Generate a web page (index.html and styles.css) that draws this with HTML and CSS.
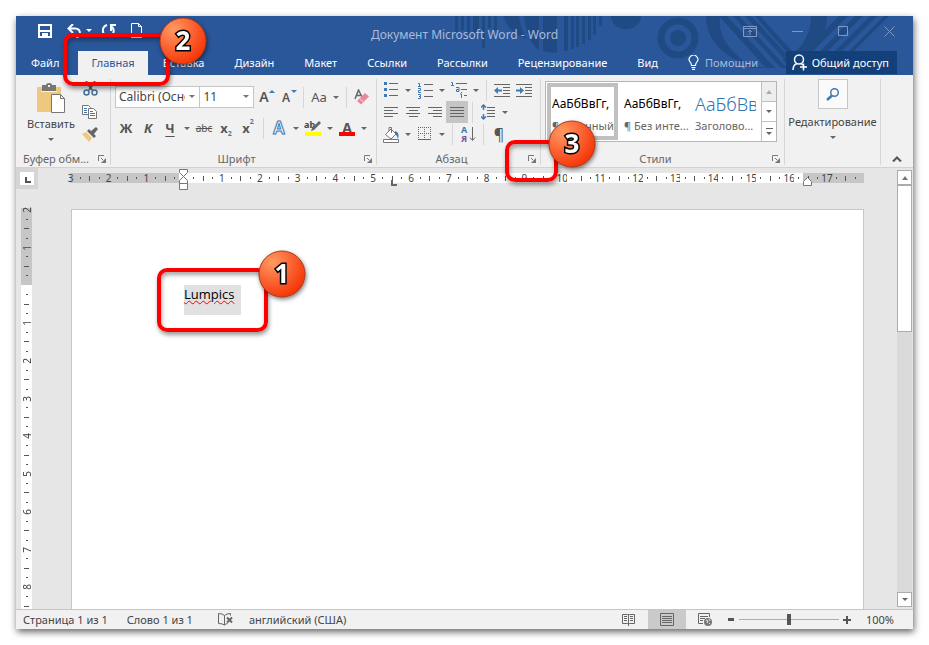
FILE: index.html
```html
<!DOCTYPE html>
<html lang="ru">
<head>
    <meta charset="UTF-8">
    <meta name="viewport" content="width=device-width, initial-scale=1.0">
    <title>Документ Microsoft Word - Word</title>
    <link rel="stylesheet" href="styles.css">
</head>
<body>
<div class="window">
    <header class="header">
        <svg class="pattern" width="460" height="59" viewBox="0 0 460 59" fill="#204a84">
            <path d="M2 0h3v17h-3zM8 0h3v14h-3zM14 0h3v18h-3zM20 0h6v17h-6zM29 0h3v32h-3zM35 0h3v12h-3zM41 0h3v14h-3z"/>
            <path d="M50 0h16q2 14 8 23q-18 -6 -24 -23zM71 0h15v34q-12 -7 -15 -34zM90 0h14v37q-8 0 -14 -2zM111 0h4v35h-4zM118 0h3v33h-3zM123 0h3v31h-3zM129 0h3v28h-3zM135 0h3v24h-3zM140 0h3v19h-3zM146 0h3v10h-3z"/>
            <path d="M158 0h30a15 13 0 0 1-30 0z"/>
            <circle cx="225" cy="22" r="17" fill="none" stroke="#204a84" stroke-width="7"/>
            <circle cx="225" cy="22" r="8"/>
            <path d="M253 0h14c-2 18 6 30 20 42l12 10h20c-38-1-66-22-66-52zM358 0h16c0 24-16 44-38 50l-7-6c18-8 29-24 29-44z"/>
            <path d="M266 0h8l48 52h-9zM280 0h6l48 52h-6zM292 0h6l40 43-3 4zM302 0h5l33 36-3 4zM386 0h9l-45 45h-9zM402 0h8l-45 45h-8zM417 0h7l-45 45h-7zM431 0h5l-38 38h-5z"/>
        </svg>
        <div class="titlebar">
            <div class="quick">
                <button class="quick-btn" aria-label="Сохранить"><svg width="14" height="14" viewBox="0 0 14 14"><path fill="none" stroke="#fff" stroke-width="2" d="M1 1h12v12H1zM1 7h12"/><path fill="#fff" d="M4 9h6v5H8v-2H6v2H4z"/></svg></button>
                <button class="quick-btn" aria-label="Отменить"><svg width="14" height="14" viewBox="0 0 14 14" fill="none" stroke="#fff" stroke-width="2"><path d="M6 0 1.500 4.500 6 9M2 4.500h6q5 0 5 5q0 3-4 4"/></svg></button>
                <span class="caret caret-light"></span>
                <button class="quick-btn quick-redo" aria-label="Повторить"><svg width="14" height="14" viewBox="0 0 14 14" fill="none" stroke="#fff" stroke-width="2"><path d="M5 1a6 6 0 0 0-1 11M14 1H9v6M9 2a6 6 0 0 1 0 10"/></svg></button>
                <button class="quick-btn quick-new" aria-label="Создать"><svg width="12" height="15" viewBox="0 0 12 15" fill="none" stroke="#fff"><path d="M.5.5h7l3 3v11H.5zM7.500.5v3h3"/></svg></button>
            </div>
            <div class="title">Документ Microsoft Word - Word</div>
            <div class="controls">
                <button aria-label="Параметры ленты"><svg width="14" height="11" viewBox="0 0 14 11"><path d="M.5.5h13v10H.5zM.5 2.500h13M7 9V4M5 6l2-2 2 2"/></svg></button>
                <button aria-label="Свернуть"><svg width="11" height="11" viewBox="0 0 11 11"><path d="M0 5.500h11"/></svg></button>
                <button aria-label="Развернуть"><svg width="11" height="11" viewBox="0 0 11 11"><path d="M.5.5h9v9h-9z"/></svg></button>
                <button aria-label="Закрыть"><svg width="11" height="11" viewBox="0 0 11 11"><path d="M.5.5l10 10M10.500.5l-10 10"/></svg></button>
            </div>
        </div>
        <nav class="tabs">
            <a class="tab tab-file" href="#">Файл</a>
            <a class="tab tab-active" href="#">Главная</a>
            <a class="tab" href="#">Вставка</a>
            <a class="tab" href="#">Дизайн</a>
            <a class="tab" href="#">Макет</a>
            <a class="tab" href="#">Ссылки</a>
            <a class="tab" href="#">Рассылки</a>
            <a class="tab" href="#">Рецензирование</a>
            <a class="tab" href="#">Вид</a>
            <a class="tab tab-help" href="#">
                <svg width="11" height="15" viewBox="0 0 11 15" fill="none" stroke="#fff" stroke-width="1.200"><path d="M3.500 10.500q0-2-1.300-3.300A4.300 4.300 0 1 1 8.800 7.200Q7.500 8.500 7.500 10.500zM3.500 12.500h4M4 14.300h3"/></svg>
                <span>Помощни</span>
            </a>
            <button class="share">
                <svg width="16" height="17" viewBox="0 0 16 17" fill="none" stroke="#fff" stroke-width="1.500"><circle cx="7" cy="5.500" r="4.500"/><path d="M1 16q0-5 4-6.500M9 9.500l2 1.500M11.500 9.500v7M8 13h7"/></svg>
                Общий доступ
            </button>
        </nav>
    </header>

    <section class="ribbon">
        <div class="group group-clipboard">
            <div class="group-body clipboard">
                <button class="paste">
                    <svg width="29" height="31" viewBox="0 0 29 31"><path fill="#edc87e" d="M0 4h24v25H0z"/><path fill="#777" d="M5 2h4q0-2 3-2t3 2h4v6H5z"/><path fill="#f1f1f1" d="M11 2h2v2h-2zM4 8h16v1H4z"/><path fill="#fff" stroke="#777" d="M14.500 11.500h9l4 4v14h-13zM23.500 11.500v4h4"/></svg>
                    <span>Вставить</span>
                    <i class="caret"></i>
                </button>
                <div class="clip-tools">
                    <button class="tool" aria-label="Вырезать"><svg width="15" height="15" viewBox="0 0 15 15" fill="none"><path stroke="#666" stroke-width="2" d="M3 0l6 9M12 0L6 9"/><circle cx="3.500" cy="11.500" r="2.500" stroke="#41719c" stroke-width="1.500"/><circle cx="11.500" cy="11.500" r="2.500" stroke="#41719c" stroke-width="1.500"/></svg></button>
                    <button class="tool" aria-label="Копировать"><svg width="16" height="14" viewBox="0 0 16 14" fill="#fff" stroke="#777"><path d="M.5.5h6l2 2v7h-8z"/><path d="M6.500 3.500h5l3 3v7h-8z"/><path stroke="#3f7ab5" d="M2 3.500h3M2 5.500h3M2 7.500h3M8 6.500h3M8 8.500h5M8 10.500h5"/></svg></button>
                    <button class="tool" aria-label="Формат по образцу"><svg width="16" height="15" viewBox="0 0 16 15"><path fill="#edc87e" d="M0 7l4-2 6 6-3 4z"/><path fill="#666" d="M5 4l2-2 7 7-2 2zM9 4l5-4 2 2-4 5z"/></svg></button>
                </div>
            </div>
            <div class="group-label"><span>Буфер обм...</span><button class="launcher" aria-label="Буфер обмена"><svg width="8" height="8"><use href="#launch"/></svg></button></div>
        </div>

        <div class="group group-font">
            <div class="group-body rows-two">
                <div class="row">
                    <div class="combo combo-name"><select aria-label="Шрифт"><option>Calibri (Основной текст)</option></select></div>
                    <div class="combo combo-size"><select aria-label="Размер шрифта"><option>11</option></select></div>
                    <button class="tool" aria-label="Увеличить размер"><span class="grow">A</span><i class="tri-up"></i></button>
                    <button class="tool" aria-label="Уменьшить размер"><span class="shrink">A</span><i class="tri-down"></i></button>
                    <i class="sep"></i>
                    <button class="tool case">Aa</button><button class="drop" aria-label="Регистр"><i class="caret"></i></button>
                    <i class="sep"></i>
                    <button class="tool" aria-label="Очистить формат"><svg width="16" height="16" viewBox="0 0 16 16"><path fill="none" stroke="#666" stroke-width="1.500" d="M1 10L4.500 1 8 8M2.500 6.500h4"/><path fill="#e8899a" d="M3 12l8-8 4 3.500-8 8z"/><path stroke="#f7d5da" d="M5.500 9.500l4 3.500"/></svg></button>
                </div>
                <div class="row">
                    <button class="tool bold">Ж</button>
                    <button class="tool italic">К</button>
                    <button class="tool under">Ч</button><button class="drop" aria-label="Подчеркивание"><i class="caret"></i></button>
                    <button class="tool strike">abc</button>
                    <button class="tool index">x<sub>2</sub></button>
                    <button class="tool index">x<sup>2</sup></button>
                    <i class="sep"></i>
                    <button class="tool effect">A</button><button class="drop" aria-label="Эффекты"><i class="caret"></i></button>
                    <button class="tool" aria-label="Цвет выделения"><svg width="18" height="17" viewBox="0 0 18 17"><text class="marker-text" x="0" y="8">ab</text><path fill="#666" d="M15 1l2 2-7 7-3 1 1-3z"/><path fill="#ff0" d="M1 12h16v4H1z"/></svg></button><button class="drop" aria-label="Выбрать выделение"><i class="caret"></i></button>
                    <button class="tool font-color">A</button><button class="drop" aria-label="Выбрать цвет"><i class="caret"></i></button>
                </div>
            </div>
            <div class="group-label"><span>Шрифт</span><button class="launcher" aria-label="Окно шрифта"><svg width="8" height="8"><use href="#launch"/></svg></button></div>
        </div>

        <div class="group group-para">
            <div class="group-body rows-three">
                <div class="row">
                    <button class="tool" aria-label="Маркеры"><svg width="14" height="16" viewBox="0 0 14 16"><path fill="#3f7ab5" d="M0 0h3v3H0zM0 6h3v3H0zM0 12h3v3H0z"/><path stroke="#666" d="M5 1.500h9M5 7.500h9M5 13.500h9"/></svg></button><button class="drop" aria-label="Вид маркеров"><i class="caret"></i></button>
                    <button class="tool" aria-label="Нумерация"><svg width="15" height="17" viewBox="0 0 15 17"><path fill="none" stroke="#3f7ab5" d="M0 1.500h1.500V5M0 4.500h3M0 6.500h2.500v2h-2v2H3M0 12.500h2.500v4H0M1 14.500h2"/><path stroke="#666" d="M6 2.500h9M6 8.500h9M6 14.500h9"/></svg></button><button class="drop" aria-label="Вид нумерации"><i class="caret"></i></button>
                    <button class="tool" aria-label="Многоуровневый список"><svg width="17" height="16" viewBox="0 0 17 16"><path fill="none" stroke="#3f7ab5" d="M0 .5h1.500V4M0 3.500h3M5 5.500h3v4H5.500v-2H8M9 12h1.500v4M10 10.500h1"/><path stroke="#666" d="M5 1.500h11M10 7.500h6M13 13.500h3"/></svg></button><button class="drop" aria-label="Вид списка"><i class="caret"></i></button>
                    <i class="sep"></i>
                    <button class="tool" aria-label="Уменьшить отступ"><svg width="16" height="13" viewBox="0 0 16 13"><path stroke="#666" d="M0 .5h16M9 3.500h7M9 6.500h7M9 9.500h7M0 12.500h16"/><path fill="#3f7ab5" d="M0 6.500L4 3v2.500h4v2H4V10z"/></svg></button>
                    <button class="tool" aria-label="Увеличить отступ"><svg width="16" height="13" viewBox="0 0 16 13"><path stroke="#666" d="M0 .5h16M9 3.500h7M9 6.500h7M9 9.500h7M0 12.500h16"/><path fill="#3f7ab5" d="M8 6.500L4 3v2.500H0v2h4V10z"/></svg></button>
                </div>
                <div class="row">
                    <button class="tool" aria-label="По левому краю"><svg width="14" height="12" viewBox="0 0 14 12" stroke="#666"><path d="M0 1.500h14M0 4.500h9M0 7.500h14M0 10.500h9"/></svg></button>
                    <button class="tool" aria-label="По центру"><svg width="14" height="12" viewBox="0 0 14 12" stroke="#666"><path d="M0 1.500h14M3 4.500h9M0 7.500h14M3 10.500h9"/></svg></button>
                    <button class="tool" aria-label="По правому краю"><svg width="14" height="12" viewBox="0 0 14 12" stroke="#666"><path d="M0 1.500h14M5 4.500h9M0 7.500h14M5 10.500h9"/></svg></button>
                    <button class="tool pressed" aria-label="По ширине"><svg width="14" height="12" viewBox="0 0 14 12" stroke="#666"><path d="M0 1.500h14M0 4.500h14M0 7.500h14M0 10.500h14"/></svg></button>
                    <i class="sep"></i>
                    <button class="tool" aria-label="Интервал"><svg width="14" height="16" viewBox="0 0 14 16"><path fill="none" stroke="#3f7ab5" stroke-width="1.500" d="M2.500 1v5M2.500 10v5M0 3.500L2.500 1 5 3.500M0 12.500L2.500 15 5 12.500"/><path stroke="#666" d="M6 3.500h8M6 6.500h8M6 9.500h8M6 12.500h8"/></svg></button><button class="drop" aria-label="Выбрать интервал"><i class="caret"></i></button>
                </div>
                <div class="row">
                    <button class="tool" aria-label="Заливка"><svg width="17" height="17" viewBox="0 0 17 17"><path fill="#fff" stroke="#777" d="M2.500 8.500L8 3l5 5-5 5zM.5 13.500h15v3H.5z"/><path fill="none" stroke="#777" d="M6 5V1.500h2.500V7"/><path fill="#3f7ab5" d="M12 5q5 1 3 8-1-4-3-5z"/></svg></button><button class="drop" aria-label="Цвет заливки"><i class="caret"></i></button>
                    <button class="tool" aria-label="Границы"><svg width="14" height="14" viewBox="0 0 14 14"><path fill="none" stroke="#666" stroke-dasharray="1 1" d="M0 .5h13M0 6.500h13M.5 0v13M6.500 0v13M12.500 0v13"/><path stroke="#666" d="M0 12.500h13"/></svg></button><button class="drop" aria-label="Вид границ"><i class="caret"></i></button>
                    <i class="sep"></i>
                    <button class="tool" aria-label="Сортировка"><svg width="15" height="18" viewBox="0 0 15 18"><text class="sort-a" x="0" y="8">А</text><text class="sort-ya" x="0" y="17">Я</text><path fill="none" stroke="#666" d="M11.500 2v13M9 12.500l2.500 3 2.500-3"/></svg></button>
                    <i class="sep"></i>
                    <button class="tool pilcrow">¶</button>
                </div>
            </div>
            <div class="group-label"><span>Абзац</span><button class="launcher" aria-label="Окно абзаца"><svg width="8" height="8"><use href="#launch"/></svg></button></div>
        </div>

        <div class="group group-styles">
            <div class="group-body">
                <div class="gallery">
                    <button class="style style-active"><span class="sample">АаБбВвГг,</span><span class="style-name">¶ Обычный</span></button>
                    <button class="style"><span class="sample">АаБбВвГг,</span><span class="style-name">¶ Без инте...</span></button>
                    <button class="style"><span class="sample sample-head">АаБбВв</span><span class="style-name">Заголово...</span></button>
                    <div class="gallery-nav">
                        <button class="nav-off" aria-label="Вверх"><i class="caret caret-up"></i></button>
                        <button aria-label="Вниз"><i class="caret"></i></button>
                        <button class="nav-more" aria-label="Все стили"><i class="caret"></i></button>
                    </div>
                </div>
            </div>
            <div class="group-label"><span>Стили</span><button class="launcher" aria-label="Окно стилей"><svg width="8" height="8"><use href="#launch"/></svg></button></div>
        </div>

        <div class="group group-edit">
            <button class="edit">
                <span class="edit-icon"><svg width="14" height="13" viewBox="0 0 14 13" fill="none" stroke="#3f7ab5"><circle cx="8.500" cy="4.500" r="3.800" stroke-width="1.500"/><path stroke-width="2.500" d="M6 7.500L1 12"/></svg></span>
                <span>Редактирование</span>
                <i class="caret"></i>
            </button>
        </div>
        <button class="collapse" aria-label="Свернуть ленту"><svg width="10" height="6" viewBox="0 0 10 6"><path fill="none" stroke="#555" stroke-width="2" d="M1 5.500l4-4 4 4"/></svg></button>
    </section>

    <main class="work">
        <div class="canvas">
            <div class="ruler-row">
                <button class="tab-stop" aria-label="Табуляция"><svg width="6" height="6" viewBox="0 0 6 6"><path fill="#555" d="M0 0h2v4h4v2H0z"/></svg></button>
                <div class="ruler" id="ruler-h"></div>
            </div>
            <div class="page-row">
                <div class="ruler-v" id="ruler-v"></div>
                <article class="page"><p class="text"><span class="typo">Lumpics</span></p></article>
            </div>
        </div>
        <div class="scroll">
            <button aria-label="Прокрутка вверх"><i class="caret caret-up"></i></button>
            <div class="scroll-track"><div class="scroll-thumb"></div></div>
            <button aria-label="Прокрутка вниз"><i class="caret"></i></button>
        </div>
    </main>

    <footer class="status">
        <span class="status-page">Страница 1 из 1</span>
        <span class="status-words">Слово 1 из 1</span>
        <svg class="status-proof" width="15" height="13" viewBox="0 0 15 13" fill="none" stroke="#666"><path d="M6.500 12V2.500q-2-2-6-2v10q4 0 6 1.500 1-1 3-1.500M6.500 2.500q2-2 6-2v2"/><path stroke-width="2" d="M9 4.500l5 5M14 4.500l-5 5"/></svg>
        <span>английский (США)</span>
        <div class="views">
            <button aria-label="Режим чтения"><svg width="13" height="13" viewBox="0 0 13 13" fill="none" stroke="#666"><path d="M.5 1.500h5l1 1 1-1h5v9h-5l-1 1-1-1h-5zM6.500 1v12M2 3.500h3M2 5.500h3M2 7.500h3M8 3.500h3M8 5.500h3M8 7.500h3"/></svg></button>
            <button class="view-on" aria-label="Разметка страницы"><svg width="14" height="13" viewBox="0 0 14 13" fill="none" stroke="#666"><path d="M.5.5h13v12H.5zM2 3.500h10M2 5.500h10M2 7.500h10M2 9.500h10"/></svg></button>
            <button aria-label="Веб-документ"><svg width="14" height="13" viewBox="0 0 14 13" fill="none" stroke="#666"><path d="M5 10.500H.5V.5h11V4M2 3.500h8M2 5.500h5M2 7.500h3"/><circle cx="10" cy="9" r="4" fill="#777" stroke="none"/><path stroke="#f1f1f1" d="M8 7l2 1-1 2M11 6l1 2M11 11l1-1"/></svg></button>
        </div>
        <button class="zoom-btn" aria-label="Уменьшить"><svg width="7" height="7"><path fill="#555" d="M0 2h6v3H0z"/></svg></button>
        <input class="zoom" type="range" min="0" max="200" value="100" aria-label="Масштаб">
        <button class="zoom-btn" aria-label="Увеличить"><svg width="8" height="8"><path fill="#555" d="M0 3h3V0h2v3h3v2H5v3H3V5H0z"/></svg></button>
        <span class="percent">100%</span>
    </footer>
</div>

<div class="mark mark-text"></div>
<div class="mark mark-tab"></div>
<div class="mark mark-launch"></div>
<svg class="ball ball-text" width="48" height="48" viewBox="0 0 48 48"><circle cx="24" cy="24" r="23"/><text x="24" y="33">1</text></svg>
<svg class="ball ball-tab" width="48" height="48" viewBox="0 0 48 48"><circle cx="24" cy="24" r="23"/><text x="24" y="33">2</text></svg>
<svg class="ball ball-launch" width="48" height="48" viewBox="0 0 48 48"><circle cx="24" cy="24" r="23"/><text x="24" y="33">3</text></svg>

<svg class="defs" width="0" height="0">
    <defs>
        <radialGradient id="orange" cx="0.3" cy="0.25" r="0.85">
            <stop offset="0" stop-color="#ff9a62"/>
            <stop offset="0.5" stop-color="#fb6232"/>
            <stop offset="1" stop-color="#f52f00"/>
        </radialGradient>
        <g id="launch"><path fill="none" stroke="#777" d="M.5 6V.5H6M3 3l2 2"/><path fill="#777" d="M8 3v5H3l2-2 1-1z"/></g>
    </defs>
</svg>
<script src="script.js"></script>
</body>
</html>
```
FILE: styles.css
```css
* {
    box-sizing: border-box;
}
body {
    display: flex;
    min-height: 100vh;
    margin: 0;
    padding: 16px;
    background: #fff;
    font-family: "Noto Sans", "Open Sans", sans-serif;
    font-size: 11px;
    line-height: 16px;
    color: #444;
    position: relative;
}
button {
    display: flex;
    align-items: center;
    justify-content: center;
    padding: 0;
    border: none;
    background: none;
    font: inherit;
    color: inherit;
}
svg {
    display: block;
    flex: none;
}
.window {
    display: flex;
    flex: 1;
    flex-direction: column;
    min-width: 0;
    background: #e6e6e6;
    box-shadow: 1px 3px 7px rgba(0, 0, 0, 0.6);
}

/* small arrows */
.caret {
    width: 0;
    height: 0;
    border: 3px solid transparent;
    border-top-color: #666;
    border-bottom: none;
}
.caret-light {
    border-top-color: #fff;
}
.caret-up {
    border-top: none;
    border-bottom: 4px solid #777;
}

/* header */
.header {
    position: relative;
    background: #2a579a;
    color: #fff;
}
.pattern {
    position: absolute;
    top: 0;
    right: 0;
}
.titlebar {
    position: relative;
    display: grid;
    grid-template-columns: 1fr auto 1fr;
    height: 35px;
}
.quick {
    display: flex;
    align-items: center;
    padding: 0 0 6px 22px;
}
.quick-btn {
    width: 14px;
    margin-right: 15px;
}
.quick .caret {
    margin: 0 10px 0 -10px;
}
.quick-redo {
    margin-right: 14px;
}
.title {
    padding-top: 11px;
    font-size: 12px;
    color: #a9bcd8;
}
.controls {
    display: flex;
    align-items: center;
    justify-content: flex-end;
    gap: 35px;
    padding: 0 18px 5px 0;
}
.controls svg {
    fill: none;
    stroke: #7f9ac3;
}
.tabs {
    position: relative;
    display: flex;
    height: 24px;
    padding: 0 16px 0 0;
}
.tab {
    padding: 4px 15px;
    color: #fff;
    text-decoration: none;
    white-space: nowrap;
}
.tab-file {
    margin-right: 4px;
}
.tab-active {
    padding: 4px 13px;
    background: #f1f1f1;
    color: #2a579a;
}
.tab-help {
    display: flex;
    gap: 6px;
    color: #a9bcd8;
}
.share {
    gap: 4px;
    height: 23px;
    margin-left: auto;
    padding: 0 8px 0 6px;
    background: #134078;
    white-space: nowrap;
}

/* ribbon */
.ribbon {
    display: flex;
    height: 93px;
    padding: 4px 0 2px;
    border-bottom: 1px solid #d2d2d2;
    background: #f1f1f1;
}
.group {
    display: flex;
    flex-direction: column;
    border-right: 1px solid #d6d6d6;
}
.group-clipboard {
    width: 95px;
}
.group-font {
    width: 266px;
}
.group-para {
    width: 164px;
}
.group-styles {
    flex: 1;
    min-width: 0;
}
.group-edit {
    width: 96px;
}
.group-body {
    flex: 1;
    min-height: 0;
    padding: 0 3px;
}
.group-label {
    display: flex;
    align-items: center;
    height: 12px;
    padding: 0 4px;
    color: #666;
    white-space: nowrap;
}
.group-label span {
    flex: 1;
    padding-right: 6px;
    text-align: center;
}
.group-label .launcher {
    width: 8px;
    height: 8px;
}
.row {
    display: flex;
    align-items: center;
    height: 22px;
}
.rows-two {
    padding-left: 4px;
}
.rows-two .row:first-child {
    margin: 7px 0 9px;
}
.tool {
    flex: none;
    width: 22px;
    height: 22px;
    color: #555;
    position: relative;
}
.drop {
    width: 12px;
    height: 22px;
}
.sep {
    width: 1px;
    height: 21px;
    margin: 0 4px;
    background: #d6d6d6;
}
.pressed {
    background: #c5c5c5;
}

/* clipboard */
.clipboard {
    display: flex;
}
.paste {
    flex-direction: column;
    justify-content: flex-start;
    width: 64px;
    padding-top: 4px;
}
.paste .caret {
    margin-top: 6px;
}
.paste span {
    margin-top: 2px;
}
.clip-tools {
    margin-top: -2px;
}
.clip-tools .tool {
    width: 14px;
    height: 23px;
}

/* font */
.combo {
    position: relative;
    height: 22px;
}
.combo::after {
    content: "";
    position: absolute;
    top: 9px;
    right: 5px;
    border: 3px solid transparent;
    border-top-color: #777;
    border-bottom: none;
}
.combo-name {
    width: 86px;
}
.combo-size {
    width: 55px;
    margin-left: -1px;
    margin-right: 1px;
}
.combo select {
    appearance: none;
    width: 100%;
    height: 100%;
    padding: 0 14px 0 3px;
    border: 1px solid #c6c6c6;
    border-radius: 0;
    background: #fff;
    font: inherit;
    font-size: 12px;
    color: #444;
    text-overflow: clip;
}
.grow {
    font-size: 14px;
    font-weight: 600;
    padding-right: 4px;
}
.shrink {
    font-size: 12px;
    font-weight: 600;
    padding: 2px 4px 0 0;
}
.tri-up,
.tri-down {
    position: absolute;
    top: 4px;
    right: 2px;
    border: 3px solid transparent;
}
.tri-up {
    border-top: none;
    border-bottom-color: #3f7ab5;
}
.tri-down {
    border-bottom: none;
    border-top-color: #3f7ab5;
}
.case {
    font-size: 13px;
}
.bold {
    font-size: 13px;
    font-weight: bold;
}
.italic {
    font-size: 13px;
    font-weight: bold;
    font-style: italic;
}
.under {
    font-size: 13px;
    font-weight: bold;
    text-decoration: underline;
    text-underline-offset: 3px;
}
.strike {
    font-size: 10px;
    text-decoration: line-through;
}
.index {
    font-size: 13px;
    font-weight: bold;
}
.index sub,
.index sup {
    font-size: 7px;
    line-height: 8px;
    color: #3f7ab5;
}
.index sub {
    align-self: flex-end;
    padding-bottom: 1px;
}
.index sup {
    align-self: flex-start;
    padding-top: 1px;
}
.effect {
    font-size: 17px;
    font-weight: 600;
    color: #fff;
    -webkit-text-stroke: 1px #3f7ab5;
    text-shadow: 0 0 2px #7fb0e0;
}
.marker-text {
    font-size: 9px;
    font-weight: bold;
    fill: #444;
}
.font-color {
    font-size: 14px;
    font-weight: bold;
}
.font-color::after {
    content: "";
    position: absolute;
    left: 3px;
    bottom: 3px;
    width: 16px;
    height: 4px;
    background: #f00;
}

/* paragraph */
.sort-a,
.sort-ya {
    font-size: 9px;
    font-weight: bold;
    fill: #3f7ab5;
}
.sort-ya {
    fill: #7f4fa0;
}
.pilcrow {
    font-size: 16px;
}

/* styles */
.gallery {
    display: flex;
    height: 61px;
    margin: 2px 4px 0 1px;
    border: 1px solid #b5b5b5;
    background: #fff;
}
.style {
    flex: 1;
    flex-direction: column;
    align-items: flex-start;
    justify-content: flex-start;
    min-width: 0;
    height: 57px;
    margin: 1px;
    padding: 9px 4px 0;
    overflow: hidden;
    white-space: nowrap;
}
.style-active {
    border: 4px solid #c0c0c0;
    padding: 5px 1px 0;
}
.sample {
    width: 100%;
    height: 24px;
    overflow: hidden;
    font-size: 12px;
    line-height: 24px;
    text-align: left;
    color: #000;
}
.sample-head {
    font-size: 18px;
    font-weight: 300;
    color: #2e74b5;
}
.style-name {
    padding-top: 2px;
    color: #666;
}
.gallery-nav {
    display: flex;
    flex-direction: column;
    width: 15px;
    border-left: 1px solid #c0c0c0;
}
.gallery-nav button {
    flex: 1;
}
.gallery-nav button + button {
    border-top: 1px solid #c0c0c0;
}
.gallery-nav .nav-off {
    background: #e4e4e4;
    opacity: 0.6;
}
.gallery-nav .nav-more {
    flex-direction: column;
    gap: 3px;
}
.nav-more::before {
    content: "";
    width: 7px;
    height: 1px;
    background: #666;
}

/* editing */
.edit {
    flex-direction: column;
    justify-content: flex-start;
}
.edit-icon {
    display: flex;
    align-items: center;
    justify-content: center;
    width: 30px;
    height: 30px;
    margin-bottom: 5px;
    border: 1px solid #c6c6c6;
    background: #fafafa;
}
.edit .caret {
    margin-top: 6px;
}
.collapse {
    align-items: flex-end;
    width: 32px;
    padding-bottom: 3px;
}

/* work area */
.work {
    display: flex;
    flex: 1;
    min-height: 0;
}
.canvas {
    display: flex;
    flex: 1;
    flex-direction: column;
    min-width: 0;
    overflow: hidden;
}
.ruler-row {
    display: flex;
    height: 37px;
    padding-right: 18px;
}
.tab-stop {
    width: 22px;
    height: 21px;
    border: 4px solid #d5d5d5;
    background: #fff;
}
.tab-stop svg {
    margin: 3px 0 0 2px;
}
.ruler {
    display: flex;
    flex: 1;
    height: 10px;
    margin: 5px 15px 0 28px;
    padding-right: 4px;
    background: linear-gradient(90deg, transparent 4px, #c6c6c6 4px);
}
.tick {
    display: flex;
    flex: 1 1 0;
    align-items: center;
    justify-content: center;
    min-width: 0;
    min-height: 0;
    position: relative;
    font-size: 10px;
    line-height: 10px;
    color: #444;
}
.tick-text {
    background: #fff;
}
.tick-zero {
    background: linear-gradient(transparent 50%, #fff 50%);
}
.tick-dot::before {
    content: "";
    width: 1px;
    height: 2px;
    background: #555;
}
.tick-half::before {
    content: "";
    width: 1px;
    height: 5px;
    background: #555;
}
.stop-icon {
    position: absolute;
    z-index: 1;
}
.indent {
    top: -4px;
    left: 0;
}
.indent-right {
    top: 4px;
    left: 0;
}
.stop-left {
    top: 7px;
    left: 4px;
}
.page-row {
    display: flex;
    flex: 1;
    min-height: 0;
}
.ruler-v {
    display: flex;
    flex-direction: column;
    width: 11px;
    margin: 0 39px -2px 5px;
    background: linear-gradient(#e6e6e6 3px, #c6c6c6 3px);
}
.ruler-v .tick {
    writing-mode: vertical-rl;
}
.ruler-v .tick span {
    transform: rotate(180deg);
}
.ruler-v .tick-dot::before {
    width: 2px;
    height: 1px;
}
.ruler-v .tick-half::before {
    width: 5px;
    height: 1px;
}
.page {
    flex: 1;
    margin: 4px 33px 0 0;
    padding: 75px 112px;
    border: 1px solid #c6c6c6;
    border-bottom: none;
    background: #fff;
}
.text {
    display: inline-block;
    height: 30px;
    margin: 0;
    padding-right: 7px;
    background: #e1e1e1;
    font-family: "Open Sans", "Noto Sans", sans-serif;
    font-size: 13px;
    line-height: 18px;
    color: #000;
}
.typo {
    text-decoration: underline wavy #f00 1px;
    text-underline-offset: 1px;
}
.scroll {
    display: flex;
    flex-direction: column;
    width: 16px;
    padding: 2px 1px 2px 0;
}
.scroll button {
    height: 15px;
    border: 1px solid #ababab;
    background: #fff;
}
.scroll-track {
    flex: 1;
    background: #dadada;
}
.scroll-thumb {
    height: 36%;
    border: 1px solid #ababab;
    background: #fff;
}

/* status bar */
.status {
    display: flex;
    align-items: center;
    height: 20px;
    padding: 0 19px 0 7px;
    border-top: 1px solid #c6c6c6;
    background: #f1f1f1;
    white-space: nowrap;
}
.status-page {
    margin-right: 19px;
}
.status-words {
    margin-right: 25px;
}
.status-proof {
    margin-right: 16px;
}
.views {
    display: flex;
    align-self: stretch;
    margin-left: auto;
    margin-right: 4px;
}
.views button {
    width: 38px;
}
.view-on {
    background: #cacaca;
}
.zoom-btn {
    width: 8px;
    height: 8px;
}
.zoom {
    appearance: none;
    width: 100px;
    height: 11px;
    margin: 0 4px 0 3px;
    background: linear-gradient(#ababab, #ababab) center / 100% 1px no-repeat;
}
.zoom::-webkit-slider-thumb {
    appearance: none;
    width: 4px;
    height: 11px;
    background: #555;
}
.percent {
    margin-left: 15px;
}

/* step callouts */
.mark {
    position: absolute;
    border: 4px solid #f00;
    border-radius: 10px;
    box-shadow: 1px 3px 4px rgba(0, 0, 0, 0.4), inset 1px 3px 4px rgba(0, 0, 0, 0.35);
}
.mark-text {
    left: 157px;
    top: 268px;
    width: 111px;
    height: 64px;
}
.mark-tab {
    left: 63px;
    top: 33px;
    width: 107px;
    height: 53px;
}
.mark-launch {
    left: 505px;
    top: 140px;
    width: 53px;
    height: 42px;
}
.ball {
    position: absolute;
    filter: drop-shadow(1px 2px 2px rgba(0, 0, 0, 0.5));
}
.ball circle {
    fill: url(#orange);
    stroke: #b03a1a;
}
.ball text {
    font-size: 26px;
    font-weight: bold;
    text-anchor: middle;
    fill: #fff;
    stroke: #000;
    stroke-width: 3px;
    paint-order: stroke;
}
.ball-text {
    left: 258px;
    top: 250px;
}
.ball-tab {
    left: 159px;
    top: 17px;
}
.ball-launch {
    left: 548px;
    top: 120px;
}
.defs {
    position: absolute;
}
```
FILE: script.js
```js
// four ticks per centimetre: number, dot, half line, dot
function buildRuler(id, from, to, textFrom, textTo) {
    var ruler = document.getElementById(id);
    for (var i = from; i <= to; i++) {
        var tick = document.createElement('div');
        tick.className = 'tick';
        if (i >= textFrom && i < textTo) {
            tick.classList.add('tick-text');
        }
        if (i % 4 === 0) {
            if (i !== 0) {
                var label = document.createElement('span');
                label.textContent = Math.abs(i / 4);
                tick.appendChild(label);
            }
        } else {
            tick.classList.add(i % 2 === 0 ? 'tick-half' : 'tick-dot');
        }
        ruler.appendChild(tick);
    }
    return ruler;
}

function addMarker(ruler, index, className, svg) {
    ruler.children[index].insertAdjacentHTML('beforeend', '<div class="stop-icon ' + className + '">' + svg + '</div>');
}

var horizontal = buildRuler('ruler-h', -12, 71, 0, 66);
var vertical = buildRuler('ruler-v', -8, 34, 1, 40);
vertical.children[8].classList.add('tick-zero');

addMarker(horizontal, 12, 'indent', '<svg width="9" height="22" viewBox="0 0 9 22" fill="#fff" stroke="#777"><path d="M.5.5h8v3l-4 4-4-4zM4.500 7.500l4 4v3h-8v-3zM.5 14.500h8v6h-8z"/></svg>');
addMarker(horizontal, 34, 'stop-left', '<svg width="6" height="6" viewBox="0 0 6 6"><path fill="#666" d="M0 0h2v4h4v2H0z"/></svg>');
addMarker(horizontal, 78, 'indent-right', '<svg width="9" height="9" viewBox="0 0 9 9" fill="#fff" stroke="#777"><path d="M4.500.5l4 4v4h-8v-4z"/></svg>');
```
